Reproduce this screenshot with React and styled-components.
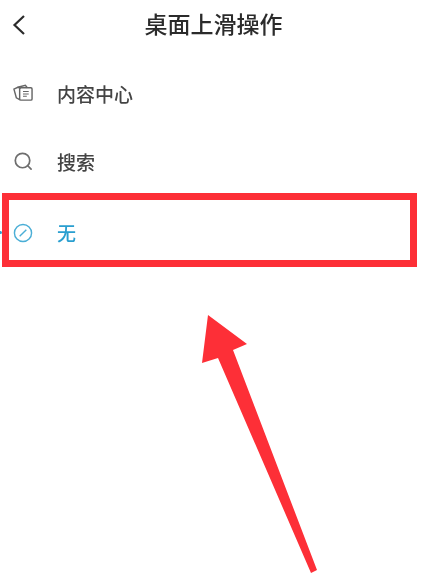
import React from 'react'
import styled, { createGlobalStyle } from 'styled-components'

const GlobalStyle = createGlobalStyle`
  html, body {
    margin: 0;
    padding: 0;
    background: #fff;
  }
  body {
    font-family: "Liberation Sans", "Noto Sans CJK SC", sans-serif;
  }
`

const Page = styled.div`
  position: relative;
  width: 431px;
  height: 588px;
  overflow: hidden;
  background: #fff;
  filter: blur(0.45px);
`

const Header = styled.header`
  display: grid;
  grid-template-columns: 60px 1fr 60px;
  align-items: center;
  height: 50px;
  padding-left: 12px;
  padding-right: 16px;
`

const Title = styled.h1`
  margin: 0;
  text-align: center;
  font-size: 23px;
  line-height: 50px;
  font-weight: 500;
  color: #2b2b2b;
`

const List = styled.div`
  display: flex;
  flex-direction: column;
  padding-top: 9px;
`

const Row = styled.div`
  display: flex;
  align-items: center;
  gap: 24px;
  height: 68px;
  padding-left: 13px;
  font-size: 19px;
  font-weight: 500;
  color: ${props => (props.active ? '#2a9fd0' : '#444')};
`

const Highlight = styled.div`
  box-sizing: border-box;
  width: 415px;
  height: 74px;
  margin-top: -2px;
  margin-left: 2px;
  border: 7px solid #fd2f37;
  ${Row} {
    box-sizing: border-box;
    height: 60px;
    padding-top: 5px;
    padding-left: 4px;
  }
`

const IconBox = styled.span`
  display: flex;
  width: 20px;
  height: 20px;
  flex-shrink: 0;
`

const Arrow = styled.svg`
  position: absolute;
  left: 0;
  top: 0;
  pointer-events: none;
`

const EdgeDot = styled.span`
  position: absolute;
  left: -1px;
  top: 231px;
  width: 3px;
  height: 3px;
  border-radius: 50%;
  background: #2a9fd0;
`

const BackIcon = () => (
  <svg width="14" height="22" viewBox="0 0 14 22" fill="none">
    <path d="M12 2L2.5 11l9.5 9" stroke="#2b2b2b" strokeWidth="2.2" />
  </svg>
)

const NewsIcon = () => (
  <svg width="20" height="20" viewBox="0 0 21 21" fill="none" stroke="#666" strokeWidth="1.5">
    <path d="M8 5.5L5 4.5 1 6.5l2.5 9 3.5 2" />
    <path d="M5 4.5L13 2.5l2 2.5" />
    <rect x="7" y="5" width="13" height="13" rx="1.2" />
    <path d="M10.5 9h6M10.5 11.5h6M10.5 14h4" strokeWidth="1.1" />
  </svg>
)

const SearchIcon = () => (
  <svg width="20" height="20" viewBox="0 0 21 21" fill="none" stroke="#6e6e6e" strokeWidth="1.8">
    <circle cx="10" cy="10" r="7.6" />
    <path d="M15.5 15.5l3.5 3.5" strokeLinecap="round" />
  </svg>
)

const NoneIcon = () => (
  <svg width="20" height="20" viewBox="0 0 21 21" fill="none" stroke="#4aaed6" strokeWidth="1.5">
    <circle cx="10.5" cy="10.5" r="9" />
    <path d="M7 14l7-7" />
  </svg>
)

const App = () => (
  <Page>
    <GlobalStyle />
    <Header>
      <BackIcon />
      <Title>桌面上滑操作</Title>
    </Header>
    <List>
      <Row>
        <IconBox><NewsIcon /></IconBox>
        内容中心
      </Row>
      <Row>
        <IconBox><SearchIcon /></IconBox>
        搜索
      </Row>
      <Highlight>
        <Row active>
          <IconBox><NoneIcon /></IconBox>
          无
        </Row>
      </Highlight>
    </List>
    <EdgeDot />
    <Arrow width="431" height="588" viewBox="0 0 431 588">
      <path d="M208 315L247 344L233 350L317 570L311 573L218 358L202 363Z" fill="#fd2f37" />
    </Arrow>
  </Page>
)

export default App
